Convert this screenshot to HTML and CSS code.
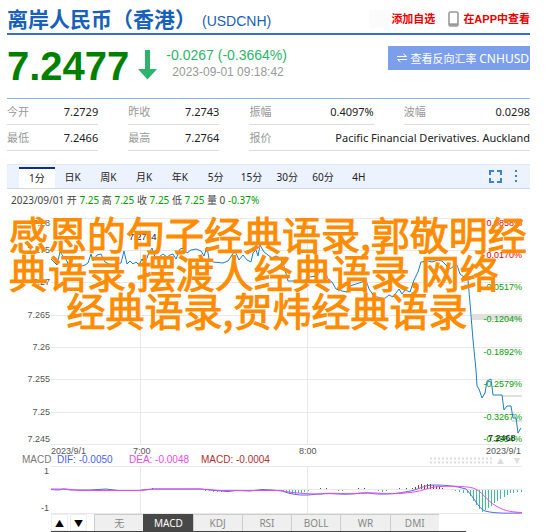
FILE: index.html
```html
<!DOCTYPE html>
<html lang="zh-CN">
<head>
  <meta charset="UTF-8">
  <title>离岸人民币（香港） USDCNH</title>
  <meta name="viewport" content="width=device-width, initial-scale=1.0">
  <link rel="stylesheet" href="styles.css">
</head>
<body>

<header>
  <h1>离岸人民币（香港）</h1>
  <span class="code">(USDCNH)</span>
  <div class="links">
    <a href="#" class="add">添加自选</a>
    <a href="#" class="app">
      <svg width="11" height="16" viewBox="0 0 11 16">
        <rect x="1" y="1" width="9" height="14" rx="1.5" fill="#fff" stroke="#999" stroke-width="1.6"/>
        <path d="M1 13.5H10" stroke="#999" stroke-width="2.4"/>
      </svg>
      在APP中查看
    </a>
  </div>
</header>

<section class="quote">
  <strong class="price">7.2477</strong>
  <svg class="arrow" width="19" height="30" viewBox="0 0 19 30">
    <path d="M7 0H12V19H19L9.500 29.500L0 19H7Z" fill="#2db36b"/>
  </svg>
  <div class="change">
    <p class="diff">-0.0267 (-0.3664%)</p>
    <p class="time">2023-09-01 09:18:42</p>
  </div>
  <button class="reverse">
    <svg width="10" height="10" viewBox="0 0 10 10">
      <path d="M0 3.500H9.500L6.500 1M10 6.500H0.500L3.500 9" fill="none" stroke="#fff"/>
    </svg>
    <span>查看反向汇率 <span class="pair">CNHUSD</span></span>
  </button>
</section>

<dl class="stats">
  <div><dt>今开</dt><dd>7.2729</dd></div>
  <div><dt>昨收</dt><dd>7.2743</dd></div>
  <div><dt>振幅</dt><dd>0.4097%</dd></div>
  <div><dt>波幅</dt><dd>0.0298</dd></div>
  <div><dt>最低</dt><dd>7.2466</dd></div>
  <div><dt>最高</dt><dd>7.2764</dd></div>
  <div class="wide"><dt>报价</dt><dd>Pacific Financial Derivatives. Auckland</dd></div>
</dl>

<nav class="periods">
  <div class="tabs">
    <a href="#" class="active">1分</a>
    <a href="#">日K</a>
    <a href="#">周K</a>
    <a href="#">月K</a>
    <a href="#">年K</a>
    <a href="#">5分</a>
    <a href="#">15分</a>
    <a href="#">30分</a>
    <a href="#">60分</a>
    <a href="#">4H</a>
  </div>
  <div class="tools">
    <svg width="13" height="13" viewBox="0 0 13 13">
      <path d="M1 5V1H5M8 1H12V5M12 8V12H8M5 12H1V8" fill="none" stroke="#4080d0" stroke-width="2"/>
    </svg>
    <svg width="3" height="13" viewBox="0 0 3 13">
      <path d="M0 0H2V2H0ZM0 5H2V7H0ZM0 10H2V12H0Z" fill="#4080d0"/>
    </svg>
  </div>
</nav>

<main>
  <p class="info">2023/09/01 开 <b>7.25</b> 高 <b>7.25</b> 收 <b>7.25</b> 低 <b>7.25</b> 量 0 <b>-0.37%</b></p>

  <svg class="chart" viewBox="7 208 523 306">
    <!-- grid -->
    <path class="grid" d="M51 218.500H522M51 250.500H522M51 282.500H522M51 315.500H522M51 347.500H522M51 379.500H522M51 412.500H522M51 444.500H522M51 466.500H522M51 489.500H522M51 513.500H522M140.500 218V444M307.500 218V444M140.500 466V513M307.500 466V513"/>
    <path class="band" d="M472 314H522V320H472ZM502 395H522V397H502ZM512 420H522V422H512Z"/>

    <g class="left">
      <text x="50" y="226">7.28</text>
      <text x="50" y="253">7.275</text>
      <text x="50" y="285">7.27</text>
      <text x="50" y="318">7.265</text>
      <text x="50" y="350">7.26</text>
      <text x="50" y="382">7.255</text>
      <text x="50" y="415">7.25</text>
      <text x="50" y="442">7.245</text>
    </g>

    <g class="right">
      <text class="up" x="522" y="226">0.0858%</text>
      <text class="up" x="522" y="258">0.0170%</text>
      <text x="522" y="290">-0.0517%</text>
      <text x="522" y="322">-0.1204%</text>
      <text x="522" y="355">-0.1892%</text>
      <text x="522" y="387">-0.2579%</text>
      <text x="522" y="420">-0.3267%</text>
      <text x="522" y="442">-0.3954%</text>
    </g>

    <!-- price -->
    <path class="line" d="M51 259L54 262L57 265L60 252L63 256L66 259L69 266L72 267L76 266L79 264L82 266L85 265L88 263L91 254L93 261L97 255L101 254L105 262L109 264L113 265L117 264L121 263L124 251L127 264L130 261L133 264L136 262L139 265L142 259L145 264L148 255L152 248L155 257L159 257L163 254L167 257L170 255L173 254L176 259L180 249L184 248L187 253L191 250L196 249L201 251L204 256L207 247L209 259L213 262L223 263L228 261L232 255L235 251L239 260L243 255L247 260L251 262L253 253L256 250L258 256L260 245L264 252L268 255L272 258L276 256L280 258L284 266L288 281L304 281L309 277L317 276L321 270L325 271L328 279L332 282L336 289L342 291L347 292L350 286L356 284L362 282L366 280L369 289L374 296L384 299L389 295L393 297L399 289L402 294L405 290L410 292L414 280L418 272L421 262L428 261L432 262L438 260L442 261L446 265L450 269L454 266L457 265L460 274L468 280L470 303L473 340L476 370L477 386L479 389L482 398L485 393L487 381L491 379L493 395L502 395L504 410L507 406L511 406L513 418L516 418L518 433L521 428"/>
    <text class="mark" x="129" y="240">7.2764</text>
    <text class="mark" x="488" y="441">7.2468</text>

    <g class="axis">
      <text x="51" y="454">2023/9/1</text>
      <text x="133" y="454">7:00</text>
      <text x="299" y="454">8:00</text>
      <text x="486" y="454">2023/9/1</text>
    </g>

    <!-- macd -->
    <g class="legend">
      <text x="22" y="463" fill="#777">MACD</text>
      <text x="57" y="463" fill="#4a62f0">DIF: -0.0050</text>
      <text x="129" y="463" fill="#e84ae8">DEA: -0.0048</text>
      <text x="201" y="463" fill="#b03030">MACD: -0.0004</text>
    </g>
    <path d="M430 458.500H492M430 462.500H492" stroke="#ddd" stroke-width="2" stroke-dasharray="2 2"/>
    <path d="M497 464L500.500 458L504 464ZM514 458H520L517 464Z" fill="#ddd"/>
    <g class="left">
      <text x="49" y="474">1</text>
      <text x="49" y="511">-1</text>
    </g>
    <path class="bar-up" d="M152.500 489V488M320.500 489V488M326.500 489V488M358.500 489V488M364.500 489V488M399.500 489V488M406.500 489V488M412.500 489V488M415.500 489V487M418.500 489V485M421.500 489V484M424.500 489V485M427.500 489V484M430.500 489V484M433.500 489V485M436.500 489V486M439.500 489V487M442.500 489V488"/>
    <path class="bar-down" d="M205.500 490V491M209.500 490V491M213.500 490V492M217.500 490V492M221.500 490V492M225.500 490V492M229.500 490V491M283.500 490V492M286.500 490V493M289.500 490V494M292.500 490V494M295.500 490V494M298.500 490V493M301.500 490V493M304.500 490V492M308.500 490V491M338.500 490V491M342.500 490V491M378.500 490V491M382.500 490V492M386.500 490V491M455.500 490V491M459.500 490V492M463.500 490V493M467.500 490V493M470.500 490V496M473.500 490V501M476.500 490V505M479.500 490V509M482.500 490V512M485.500 490V510M488.500 490V508M491.500 490V506M494.500 490V503M497.500 490V501M500.500 490V499M504.500 490V497M507.500 490V495M510.500 490V493M513.500 490V493M517.500 490V492M521.500 490V492"/>
    <path class="dif" d="M51 489.500L58 490L64 489L70 490H90L106 489L118 490.500H138L152 489H200L215 490.500L228 491.500L236 490.500L250 491L262 489.500L272 490L282 491C290 494 298 495.500 308 495C318 494 328 493 338 494C348 495 358 493 368 493C380 495 394 494 405 492C420 490 422 485 434 485C446 485 456 486 466 489C474 497 478 508 485 511C496 514 512 513 522 513"/>
    <path class="dea" d="M51 489H66L80 490.500H140L155 489H200L220 490.500L260 490.500L280 490.500C292 493 306 494 320 494C336 492 348 495 360 493C376 492 388 495 405 493C422 492 428 487 440 486.500C452 486 464 486 473 488C482 491 486 500 496 506C506 512 514 512 522 512.500"/>
  </svg>

  <div class="indicators">
    <button class="move">▲</button>
    <button class="move">▼</button>
    <div class="list">
      <button>无</button>
      <button class="active">MACD</button>
      <button>KDJ</button>
      <button>RSI</button>
      <button>BOLL</button>
      <button>WR</button>
      <button>DMI</button>
    </div>
  </div>
  <div class="scroll"></div>
</main>

<!-- Titre par-dessus -->
<div class="caption">
  <p class="start">感恩的句子经典语录,郭敬明经</p>
  <p class="start">典语录,摆渡人经典语录,网络</p>
  <p>经典语录,贺炜经典语录</p>
</div>

</body>
</html>
```
FILE: styles.css
```css
:root {
  --blue: #1861b8;
  --green: #00a000;
  --red: #e60000;
}

* {
  margin: 0;
  padding: 0;
  box-sizing: border-box;
}

body {
  font-family: "Noto Sans", "Noto Sans CJK SC", sans-serif;
  font-size: 11px;
  color: #222;
  background: #fff;
  padding: 0 20px 0 7px;
  position: relative;
}

a {
  color: inherit;
  text-decoration: none;
}

button {
  font: inherit;
  border: none;
  cursor: pointer;
}

/* En-tête */
header {
  display: flex;
  align-items: center;
  height: 35px;
  padding-top: 2px;
  border-bottom: 2px solid #3c6bcf;
}

h1 {
  font: bold 21px/30px "Noto Sans CJK SC", sans-serif;
  color: var(--blue);
}

.code {
  font: 14px/20px "Liberation Sans", sans-serif;
  color: var(--blue);
  margin-left: 6px;
  padding-top: 6px;
}

.links {
  display: flex;
  align-items: center;
  gap: 13px;
  margin-left: auto;
  font: bold 11px/18px "Liberation Sans", "Noto Sans CJK SC", sans-serif;
  color: var(--red);
  padding-top: 2px;
}

.links .add {
  border-left: 22px solid #fbfbfb;
}

.links .app {
  display: flex;
  align-items: center;
  gap: 4px;
}

/* Cours */
.quote {
  display: flex;
  align-items: flex-start;
  height: 63px;
  padding-top: 11px;
}

.price {
  font: bold 40px/40px "Liberation Sans", sans-serif;
  color: #008000;
}

.arrow {
  margin: 4px 9px 0 9px;
}

.change {
  font-family: "Liberation Sans", sans-serif;
}

.diff {
  font-size: 14px;
  line-height: 18px;
  color: #2db36b;
}

.time {
  font-size: 12px;
  line-height: 16px;
  color: #999;
  padding-left: 6px;
}

.reverse {
  display: flex;
  align-items: center;
  gap: 3px;
  height: 24px;
  padding: 0 1px 0 9px;
  margin-left: auto;
  background: #7c9fec;
  color: #fff;
  white-space: nowrap;
}

.pair {
  font-size: 12px;
}

/* Données */
.stats {
  display: grid;
  grid-template-columns: 91fr 91fr 124fr 126fr;
  column-gap: 30px;
  border-top: 1px solid #8ab4e6;
}

.stats div {
  display: flex;
  justify-content: space-between;
  height: 26px;
  line-height: 26px;
  border-bottom: 1px solid #ddd;
}

.stats .wide {
  grid-column: span 2;
}

.stats dt {
  color: #999;
}

/* Périodes */
.periods {
  display: flex;
  justify-content: space-between;
  align-items: center;
  height: 25px;
  margin-top: 13px;
  padding-left: 12px;
  background: #edf3fe;
  border-top: 1px solid #dfe9f5;
  border-bottom: 1px solid #ccd8ec;
}

.tabs {
  display: flex;
  width: 70%;
  align-self: stretch;
  font-size: 10px;
}

.tabs a {
  flex: 1;
  margin-top: 2px;
  line-height: 20px;
  text-align: center;
}

.tabs .active {
  background: #fff;
  border-top: 2px solid #0d2f8a;
  line-height: 18px;
}

.tools {
  display: flex;
  gap: 13px;
  padding-right: 12px;
}

/* Graphique */
.info {
  font-size: 10px;
  line-height: 18px;
  height: 19px;
  padding: 2px 0 0 4px;
  color: #444;
}

.info b {
  font-weight: normal;
  color: var(--green);
}

.chart {
  display: block;
  width: 100%;
  font-family: "Liberation Sans", sans-serif;
  font-size: 9px;
}

.grid {
  stroke: #e8e8e8;
}

.band {
  fill: #e0e0e0;
}

.line {
  fill: none;
  stroke: #1a80c4;
}

.left, .axis {
  fill: #555;
}

.left, .right {
  text-anchor: end;
}

.right {
  fill: var(--green);
}

.right .up {
  fill: var(--red);
}

.mark {
  fill: #111;
}

.legend {
  font-size: 10px;
}

.bar-up {
  stroke: #b03020;
}

.bar-down {
  stroke: #3cc09a;
}

.dif, .dea {
  fill: none;
  stroke: #5868f0;
}

.dea {
  stroke: #e84ae8;
}

/* Indicateurs */
.indicators {
  display: flex;
  gap: 2px;
  height: 17px;
  padding-left: 44px;
}

.move {
  width: 17px;
  font-size: 9px;
  line-height: 17px;
  background: #fff;
  border: 1px solid #eee;
}

.list {
  display: flex;
  width: 72%;
  margin-left: 5px;
}

.list button {
  flex: 1;
  font-size: 10px;
  line-height: 16px;
  color: #888;
  background: #efefef;
  border: 1px solid #ccc;
  border-width: 1px 0 0 1px;
}

.list .active {
  color: #fff;
  background: #484848;
  border-color: #484848;
}

.scroll {
  height: 1px;
  margin: 0 64px 0 44px;
  background: #444;
}

/* Titre */
.caption {
  position: absolute;
  top: 214px;
  left: 9px;
  right: 25px;
  font: 400 39px/38px "Noto Sans CJK SC", sans-serif;
  color: #ff8c00;
  -webkit-text-stroke: 1px #ff8c00;
  text-align: center;
  white-space: nowrap;
}

.caption .start {
  text-align: left;
}
```
